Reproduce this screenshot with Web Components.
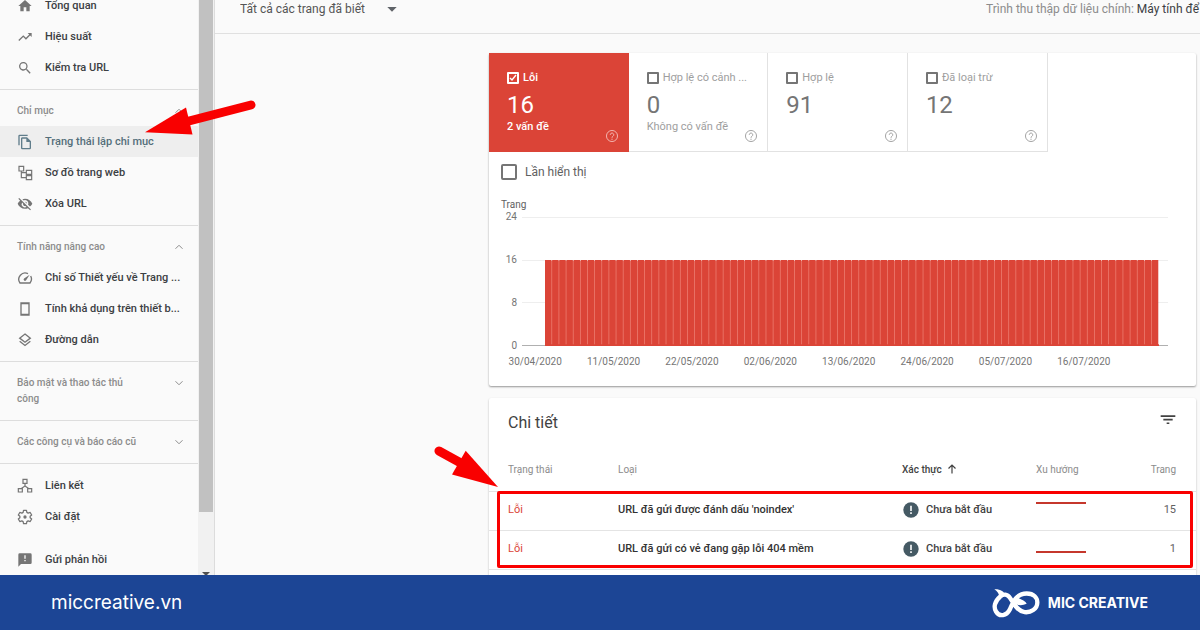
<!DOCTYPE html>
<html lang="vi">
<head>
<meta charset="utf-8">
<title>Trạng thái lập chỉ mục</title>
<style>
  html, body { margin: 0; height: 100%; }
  body { font-family: Roboto, "Liberation Sans", sans-serif; background: #fafafa; overflow: hidden; }
</style>
</head>
<body>
<console-app></console-app>

<script>
const ICONS = {
  home: '<path d="M10 20v-6h4v6h5v-8h3L12 3 2 12h3v8z"/>',
  trend: '<path d="M16 6l2.3 2.3-4.9 4.9-4-4L2 16.600l1.400 1.400 6-6 4 4 6.300-6.300L22 12V6z"/>',
  search: '<path d="M15.500 14h-.8l-.3-.3A6.500 6.500 0 1 0 13.700 14.400l.3.3v.8l5 5 1.500-1.500zm-6 0a4.500 4.500 0 1 1 0-9 4.500 4.500 0 0 1 0 9z"/>',
  copy: '<path d="M16 1H4a2 2 0 0 0-2 2v14h2V3h12zm-1 4 6 6v10a2 2 0 0 1-2 2H8a2 2 0 0 1-2-2V7c0-1.100.9-2 2-2zM8 7v14h11v-9h-5V7z"/>',
  tree: '<path d="M3 2h7v7H3zM14 8h8v6h-8zM14 16h8v6h-8zM6.500 9v10H14M6.500 11.500H14" fill="none" stroke="currentColor" stroke-width="1.800"/>',
  hidden: '<path d="M12 6a5 5 0 0 1 4.600 7l2.900 2.900A11.800 11.800 0 0 0 23 11.500C21.300 7.100 17 4 12 4c-1.400 0-2.700.3-4 .7l2.200 2.100A5 5 0 0 1 12 6zM2 4.300l2.700 2.700A11.800 11.800 0 0 0 1 11.500C2.700 15.900 7 19 12 19c1.500 0 3-.3 4.400-.8l3.300 3.300 1.300-1.300L3.300 3zM7.500 9.800l1.600 1.500a3 3 0 0 0 3.600 3.600l1.600 1.600A5 5 0 0 1 7.500 9.800zm4.300-1.300 3.200 3.200a3 3 0 0 0-3.200-3.200z"/>',
  speed: '<path d="M16.500 5.500A9.500 9.500 0 0 0 4.500 19.500h15A9.500 9.500 0 0 0 20.500 9" fill="none" stroke="currentColor" stroke-width="2"/><path d="M10.600 15.800a2 2 0 0 0 2.800 0L19 7l-8.400 5.900a2 2 0 0 0 0 2.900z"/>',
  phone: '<path d="M6 3h12v18H6z" fill="none" stroke="currentColor" stroke-width="2"/><path d="M6 3h12v2H6zM6 19h12v2H6z"/>',
  layers: '<path d="M12 3l8 6.200-8 6.200-8-6.200z" fill="none" stroke="currentColor" stroke-width="2"/><path d="M4 14l8 6.200 8-6.200" fill="none" stroke="currentColor" stroke-width="2"/>',
  links: '<path d="M9 2h6v6H9zM2 16h6v5H2zM16 16h6v5h-6zM12 8v4l-6 4M12 12l6 4" fill="none" stroke="currentColor" stroke-width="1.800"/>',
  gear: '<path d="M9.800 2h4.400l.6 3 2 1.200 3-1 2.200 3.800-2.300 2v2l2.300 2-2.200 3.800-3-1-2 1.200-.6 3H9.800l-.6-3-2-1.200-3 1L2 15l2.300-2v-2L2 9l2.200-3.800 3 1 2-1.200z" fill="none" stroke="currentColor" stroke-width="1.900" stroke-linejoin="round"/><circle cx="12" cy="12" r="2.500"/>',
  feedback: '<path d="M20 2H4a2 2 0 0 0-2 2v18l4-4h14a2 2 0 0 0 2-2V4a2 2 0 0 0-2-2zm-7 12h-2v-2h2zm0-4h-2V5h2z"/>',
  up: '<path d="M5 15.500l7-7 7 7" fill="none" stroke="currentColor" stroke-width="2"/>',
  down: '<path d="M5 8.500l7 7 7-7" fill="none" stroke="currentColor" stroke-width="2"/>',
  caret: '<path d="M5 9h14l-7 7z"/>',
  help: '<circle cx="12" cy="12" r="9.500" fill="none" stroke="currentColor" stroke-width="1.600"/><path d="M9 10a3 3 0 1 1 4.700 2.400c-1 .7-1.700 1.200-1.700 2.600" fill="none" stroke="currentColor" stroke-width="1.700"/><path d="M11 16.500h2v2h-2z"/>',
  filter: '<path d="M10 18h4v-2.400h-4zM1 5v2.400h22V5zm4 7.700h14v-2.400H5z"/>',
  arrow: '<path d="M12 21V4M5 11l7-7 7 7" fill="none" stroke="currentColor" stroke-width="2.400"/>',
  alert: '<circle cx="12" cy="12" r="11.500"/><path d="M10.800 5.500h2.400v8h-2.400zM10.800 15.500h2.400V18h-2.400z" fill="#fff"/>'
};

const define = (name, html, setup) => {
  const template = document.createElement('template');
  template.innerHTML = html;
  customElements.define(name, class extends HTMLElement {
    connectedCallback() {
      if (this.shadowRoot) return;
      this.attachShadow({ mode: 'open' }).append(template.content.cloneNode(true));
      if (setup) setup(this, this.shadowRoot);
    }
  });
};

define('ui-icon', `
  <style>
    :host { display: block; flex: none; width: 16px; height: 16px; }
    svg { display: block; width: 100%; height: 100%; fill: currentColor; }
  </style><svg viewBox="0 0 24 24" aria-hidden="true"></svg>`,
  (host, root) => { root.querySelector('svg').innerHTML = ICONS[host.getAttribute('name')]; });

define('nav-item', `
  <style>
    :host { display: block; }
    a { display: flex; align-items: center; gap: 12px; height: 31px; padding: 0 17px;
        font-size: 11px; font-weight: 500; color: #3c4043; text-decoration: none; white-space: nowrap; }
    ui-icon { color: #757575; }
    :host([active]) a { background: #eeeeee; color: #546e7a; }
    :host([active]) ui-icon { color: #607d8b; }
  </style><a href="#"><span><slot></slot></span></a>`,
  (host, root) => root.querySelector('a').insertAdjacentHTML('afterbegin', `<ui-icon name="${host.getAttribute('icon')}"></ui-icon>`));

define('nav-section', `
  <style>
    :host { display: block; border-top: 1px solid #dddddd; }
    button { display: flex; justify-content: space-between; align-items: flex-start; width: 100%;
             margin: 0; border: 0; background: none; padding: 13px 13px 7px 17px;
             font: 500 10px/16px Roboto, sans-serif; color: #8c8c8c; text-align: left; }
    .title { max-width: 124px; }
    .items { padding-bottom: 6px; }
    :host([collapsed]) button { padding-bottom: 13px; }
    :host([collapsed]) .items { display: none; }
    ui-icon { width: 12px; height: 12px; margin: 2px 0; }
  </style>
  <button type="button"><span class="title"></span></button><div class="items"><slot></slot></div>`,
  (host, root) => {
    root.querySelector('.title').textContent = host.getAttribute('heading');
    const closed = host.hasAttribute('collapsed');
    const button = root.querySelector('button');
    button.setAttribute('aria-expanded', String(!closed));
    button.insertAdjacentHTML('beforeend', `<ui-icon name="${closed ? 'down' : 'up'}"></ui-icon>`);
  });

define('side-nav', `
  <style>
    :host { display: flex; flex: none; width: 214px; border-right: 1px solid #dcdcdc; overflow: hidden; }
    nav { flex: 1; margin-top: -10px; }
    .group { padding-bottom: 6px; }
    .tail { border-top: 1px solid #dddddd; padding-top: 6px; }
    .feedback { margin-top: 12px; }
    .track { display: flex; flex-direction: column; justify-content: space-between; align-items: center;
             width: 16px; background: #f1f1f1; }
    .thumb { width: 14px; height: 89%; background: #c1c1c1; }
    .step { border: 4px solid transparent; border-top-color: #505050; border-bottom: 0; margin-bottom: -1px; }
  </style>
  <nav>
    <div class="group">
      <nav-item icon="home">Tổng quan</nav-item>
      <nav-item icon="trend">Hiệu suất</nav-item>
      <nav-item icon="search">Kiểm tra URL</nav-item>
    </div>
    <nav-section heading="Chỉ mục">
      <nav-item icon="copy" active>Trạng thái lập chỉ mục</nav-item>
      <nav-item icon="tree">Sơ đồ trang web</nav-item>
      <nav-item icon="hidden">Xóa URL</nav-item>
    </nav-section>
    <nav-section heading="Tính năng nâng cao">
      <nav-item icon="speed">Chỉ số Thiết yếu về Trang ...</nav-item>
      <nav-item icon="phone">Tính khả dụng trên thiết b...</nav-item>
      <nav-item icon="layers">Đường dẫn</nav-item>
    </nav-section>
    <nav-section heading="Bảo mật và thao tác thủ công" collapsed></nav-section>
    <nav-section heading="Các công cụ và báo cáo cũ" collapsed></nav-section>
    <div class="tail">
      <nav-item icon="links">Liên kết</nav-item>
      <nav-item icon="gear">Cài đặt</nav-item>
      <nav-item class="feedback" icon="feedback">Gửi phản hồi</nav-item>
    </div>
  </nav>
  <div class="track"><div class="thumb"></div><div class="step"></div></div>`);

define('top-bar', `
  <style>
    :host { display: flex; justify-content: space-between; border-bottom: 1px solid #e0e0e0;
            padding: 0 1px 15px 25px; font-size: 12px; line-height: 18px; color: #8c8c8c; white-space: nowrap; }
    label { display: flex; align-items: center; gap: 18px; color: #5f6368; }
    select { appearance: none; border: 0; margin: 0; padding: 0; background: none; height: 18px;
             font: 12px/18px Roboto, sans-serif; color: #555555; }
    b { font-weight: 400; color: #3c4043; }
  </style>
  <label><select aria-label="Trang"><option>Tất cả các trang đã biết</option></select><ui-icon name="caret"></ui-icon></label>
  <span>Trình thu thập dữ liệu chính: <b>Máy tính để</b></span>`);

define('status-tile', `
  <style>
    :host { display: block; box-sizing: border-box; position: relative; height: 99px; padding: 18px 0 0 18px;
            border: solid #e2e2e2; border-width: 0 1px 1px 0; color: #9e9e9e; font-size: 11px; }
    label { display: flex; align-items: center; gap: 4px; line-height: 14px; white-space: nowrap; }
    input { appearance: none; flex: none; box-sizing: border-box; width: 12px; height: 12px; margin: 0;
            border: 2px solid #757575; border-radius: 1px; }
    .count { font-size: 24px; line-height: 28px; margin-top: 6px; color: #757575; }
    .note { line-height: 14px; margin-top: 1px; }
    ui-icon { position: absolute; right: 9px; bottom: 8px; width: 14px; height: 14px; }
    :host([selected]) { background: #db4437; border-color: #db4437; color: #fff; font-weight: 500; }
    :host([selected]) .count { color: #fff; font-weight: 400; }
    :host([selected]) ui-icon { color: #f3bbb6; }
    :host([selected]) input { border-color: #fff;
      background: url("data:image/svg+xml,%3Csvg xmlns='http://www.w3.org/2000/svg' viewBox='0 0 8 8'%3E%3Cpath d='M1 4l2 2 4-5' fill='none' stroke='white' stroke-width='1.400'/%3E%3C/svg%3E") center / 8px 8px no-repeat; }
  </style>
  <label><input type="checkbox"><span><slot></slot></span></label>
  <div class="count"></div><div class="note"></div><ui-icon name="help"></ui-icon>`,
  (host, root) => {
    root.querySelector('input').checked = host.hasAttribute('selected');
    root.querySelector('.count').textContent = host.getAttribute('count');
    root.querySelector('.note').textContent = host.getAttribute('note') || '';
  });

define('page-chart', `
  <style>
    :host { display: block; font-size: 10px; line-height: 12px; color: #757575; }
    .unit { margin-left: 12px; color: #616161; }
    .plot { display: grid; grid-template-columns: 16px 1fr; column-gap: 5px; margin: 0 28px 0 12px; height: 141px; }
    .axis, .lines { display: flex; flex-direction: column; justify-content: space-between; }
    .axis { text-align: right; }
    .lines { grid-area: 1 / 2; margin: 6px 0; }
    .lines i { height: 1px; background: #eeeeee; }
    .lines i:last-child { background: #b0b0b0; }
    svg { grid-area: 1 / 2; align-self: end; box-sizing: border-box; width: 100%; height: 92px;
          padding: 0 9px 6px 23px; fill: #db4437; }
    .dates { display: grid; grid-template-columns: repeat(8, 1fr); margin: 4px 73px 0 7px; text-align: center; white-space: nowrap; }
  </style>
  <div class="unit">Trang</div>
  <div class="plot">
    <div class="axis"><span>24</span><span>16</span><span>8</span><span>0</span></div>
    <div class="lines"><i></i><i></i><i></i><i></i></div>
    <svg viewBox="0 0 860 100" preserveAspectRatio="none" aria-hidden="true"></svg>
  </div>
  <div class="dates"></div>`,
  (host, root) => {
    root.querySelector('svg').innerHTML =
      '<rect y="1" width="858" height="99" fill="#ee8276"/>' +
      Array.from({ length: 86 }, (_, i) => `<rect x="${i * 10}" width="9" height="100"/>`).join('') +
      '<rect y="98" width="860" height="2"/>';
    root.querySelector('.dates').innerHTML =
      ['30/04/2020', '11/05/2020', '22/05/2020', '02/06/2020', '13/06/2020', '24/06/2020', '05/07/2020', '16/07/2020']
        .map(d => `<span>${d}</span>`).join('');
  });

define('summary-card', `
  <style>
    :host { display: block; background: #fff; border-radius: 2px; box-shadow: 0 1px 2px rgba(0,0,0,.4); padding-bottom: 18px; }
    .tiles { display: grid; grid-template-columns: repeat(4, 1fr); width: 79%; }
    .impressions { display: flex; align-items: center; gap: 8px; margin: 12px 12px 19px; height: 16px; width: max-content;
                   font-size: 12px; color: #616161; }
    .impressions input { appearance: none; box-sizing: border-box; width: 16px; height: 16px; margin: 0;
                         border: 2px solid #757575; border-radius: 2px; }
  </style>
  <div class="tiles">
    <status-tile selected count="16" note="2 vấn đề">Lỗi</status-tile>
    <status-tile count="0" note="Không có vấn đề">Hợp lệ có cảnh ...</status-tile>
    <status-tile count="91">Hợp lệ</status-tile>
    <status-tile count="12">Đã loại trừ</status-tile>
  </div>
  <label class="impressions"><input type="checkbox">Lần hiển thị</label>
  <page-chart></page-chart>`);

define('details-card', `
  <style>
    :host { display: block; position: relative; background: #fff; border-radius: 2px; box-shadow: 0 1px 2px rgba(0,0,0,.3); height: 240px; }
    header { display: flex; justify-content: space-between; align-items: flex-start; padding: 14px 20px 13px 19px; }
    h2 { margin: 0; font-size: 16px; line-height: 22px; font-weight: 400; color: #424242; }
    header button { border: 0; background: none; margin: 0; padding: 0; color: #424242; }
    .data { position: relative; }
    table { width: 100%; table-layout: fixed; border-collapse: separate; border-spacing: 0; font-size: 11px; color: #424242; }
    th { height: 44px; padding: 0; text-align: left; font-size: 10px; font-weight: 400; color: #8c8c8c; border-bottom: 1px solid #e4e4e4; }
    td { height: 35px; padding: 0 0 3px; border-bottom: 1px solid #e4e4e4; white-space: nowrap; }
    th:first-child, td:first-child { padding-left: 19px; width: 110px; }
    th:nth-child(3) { width: 134px; color: #424242; font-weight: 500; }
    th:nth-child(4) { width: 90px; }
    th:last-child, td:last-child { width: 50px; padding-right: 20px; text-align: right; }
    td:first-child { color: #db4437; }
    td:nth-child(2) { font-weight: 500; color: #333; }
    td:last-child { color: #616161; }
    .cell { display: flex; align-items: center; gap: 4px; }
    td .cell { gap: 7px; padding-left: 1px; font-weight: 500; }
    th ui-icon { width: 12px; height: 12px; }
    td ui-icon { color: #455a64; }
    td svg { display: block; width: 50px; height: 20px; stroke: #c5372c; stroke-width: 2; }
    .mark { position: absolute; inset: 44px 3px auto 8px; height: 71px; border: 3px solid #f90000; border-radius: 2px; }
    .pointer { position: absolute; left: -56px; top: 46px; width: 66px; height: 46px; fill: #f90000; }
  </style>
  <header><h2>Chi tiết</h2><button type="button" aria-label="Lọc"><ui-icon name="filter"></ui-icon></button></header>
  <div class="data">
    <table>
      <thead><tr><th>Trạng thái</th><th>Loại</th><th><span class="cell">Xác thực <ui-icon name="arrow"></ui-icon></span></th><th>Xu hướng</th><th>Trang</th></tr></thead>
      <tbody>
        <tr><td>Lỗi</td><td>URL đã gửi được đánh dấu 'noindex'</td><td><span class="cell"><ui-icon name="alert"></ui-icon>Chưa bắt đầu</span></td><td><svg viewBox="0 0 50 20"><path d="M0 3h50"/></svg></td><td>15</td></tr>
        <tr><td>Lỗi</td><td>URL đã gửi có vẻ đang gặp lỗi 404 mềm</td><td><span class="cell"><ui-icon name="alert"></ui-icon>Chưa bắt đầu</span></td><td><svg viewBox="0 0 50 20"><path d="M0 13h50"/></svg></td><td>1</td></tr>
      </tbody>
    </table>
    <div class="mark"></div>
  </div>
  <svg class="pointer" viewBox="433 444 66 46" aria-hidden="true">
    <path d="M439 451l20 11" stroke="#f90000" stroke-width="9" stroke-linecap="round"/><path d="M465.700 450.700L498 487l-46-12.500z"/>
  </svg>`);

define('brand-bar', `
  <style>
    :host { display: flex; flex: none; align-items: center; justify-content: space-between; height: 55px; box-sizing: border-box;
            padding: 0 52px 1px 51px; background: #1c4595; color: #fff; font-family: Inter, sans-serif; }
    a { color: inherit; text-decoration: none; font-size: 19px; }
    .brand { display: flex; align-items: center; gap: 8px; font-size: 14px; font-weight: 700; }
    svg { display: block; width: 48px; height: 31px; }
  </style>
  <a href="#">miccreative.vn</a>
  <div class="brand">
    <svg viewBox="0 0 144 92" aria-hidden="true">
      <path d="M25 28C8 42 4 60 12 73C22 90 44 86 53 68C64 42 74 19 104 19C126 19 136 32 136 46C136 66 116 77 98 75C76 72 64 48 54 32C46 20 34 20 25 28" fill="none" stroke="#fff" stroke-width="13"/>
      <path d="M7 6C24 5 38 12 39 25L20 37C24 22 18 13 7 6zM74 26C80 38 100 38 104 50C90 56 74 56 62 44z" fill="#fff"/>
    </svg>
    <span>MIC CREATIVE</span>
  </div>`);

define('console-app', `
  <style>
    :host { display: flex; flex-direction: column; height: 100vh; overflow: hidden; }
    .body { display: flex; flex: 1; min-height: 0; position: relative; overflow: hidden; }
    main { flex: 1; min-width: 0; }
    .cards { display: grid; gap: 12px; padding: 19px 4px 0 274px; }
    .pointer { position: absolute; left: 140px; top: 95px; width: 120px; height: 45px; fill: #f90000; }
  </style>
  <div class="body">
    <side-nav></side-nav>
    <main>
      <top-bar></top-bar>
      <div class="cards"><summary-card></summary-card><details-card></details-card></div>
    </main>
    <svg class="pointer" viewBox="140 95 120 45" aria-hidden="true">
      <path d="M189 121l62-16" stroke="#f90000" stroke-width="9" stroke-linecap="round"/><path d="M186 107.500L192.500 134.500 145 132.300z"/>
    </svg>
  </div>
  <brand-bar></brand-bar>`);
</script>
</body>
</html>
